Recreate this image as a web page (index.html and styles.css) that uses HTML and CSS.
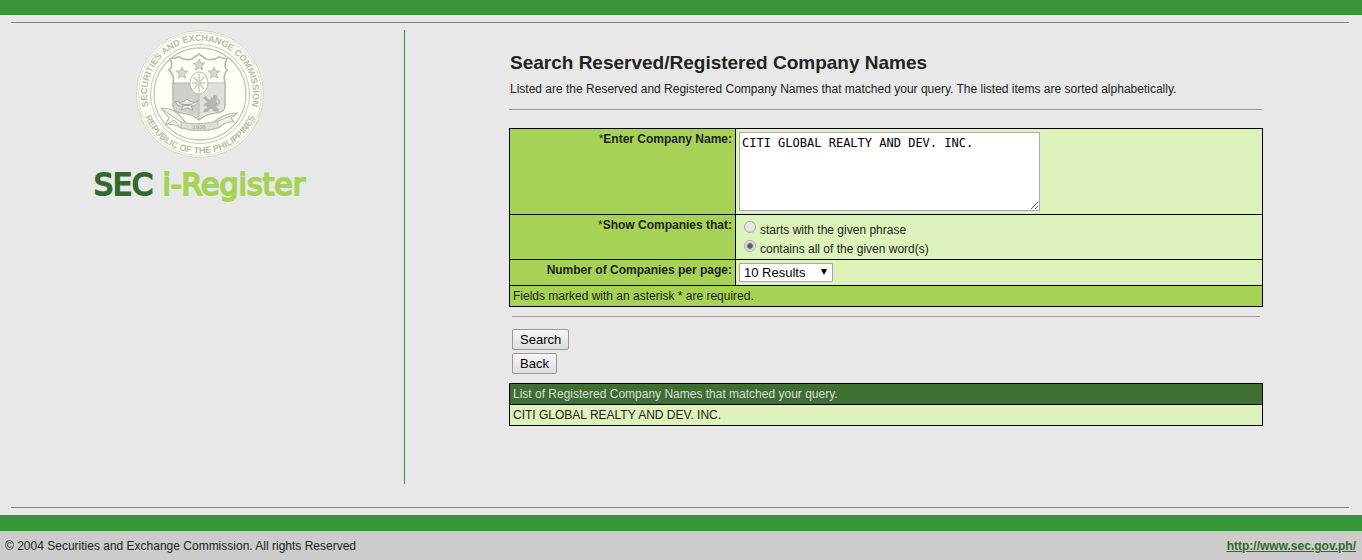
FILE: index.html
```html
<!DOCTYPE html>
<html lang="en">
<head>
  <meta charset="UTF-8">
  <meta name="viewport" content="width=device-width, initial-scale=1.0">
  <title>SEC i-Register</title>
  <link rel="stylesheet" href="styles.css">
</head>
<body>
  <div class="bar bar-top"></div>

  <div class="page">
    <div class="sidebar">
      <svg class="seal" viewBox="0 0 128 128" role="img" aria-label="SEC seal">
        <defs>
          <path id="arc-top" d="M14.2 82.1 A53 53 0 1 1 113.8 82.1"/>
          <path id="arc-bottom" d="M5.8 76.4 A59.5 59.5 0 0 0 122.2 76.4"/>
        </defs>
        <circle cx="64" cy="64" r="63.5" fill="#fffff6" stroke="#d5d5c4"/>
        <circle cx="64" cy="64" r="61.5" fill="none" stroke="#deded2"/>
        <circle cx="64" cy="64" r="49.5" fill="none" stroke="#c6c6be"/>
        <circle cx="64" cy="64" r="46" fill="none" stroke="#c6c6be" stroke-width="1.3"/>
        <text class="seal-text"><textPath href="#arc-top" startOffset="50%">SECURITIES AND EXCHANGE COMMISSION</textPath></text>
        <text class="seal-text"><textPath href="#arc-bottom" startOffset="50%">REPUBLIC OF THE PHILIPPINES</textPath></text>
        <!-- shield -->
        <path d="M63 24 L70 29 Q77 31 83 27 L91 29 Q87 36 91 40 Q87 45 89 53 V75 Q89 82 80 83 Q69 84 63 90 Q57 84 46 83 Q37 82 37 75 V53 Q39 45 33 40 Q38 36 34 29 L43 27 Q50 31 56 29 Z" fill="#fffff6" stroke="#b9b9b1" stroke-width="1.7"/>
        <path d="M38 53 H63 V88 Q57 83 47 82 Q38 81 38 74 Z" fill="#d0d0ca"/>
        <path d="M63 53 H88 V74 Q88 81 79 82 Q69 83 63 88 Z" fill="#e0e0db"/>
        <path d="M37 53 H89 M63 53 V89" stroke="#b9b9b1"/>
        <g fill="#d7d7d1" stroke="#babab1">
          <path id="star" d="M63 29 L64.600 32.800 L68.700 33.200 L65.600 35.900 L66.500 40 L63 37.800 L59.500 40 L60.400 35.900 L57.300 33.200 L61.400 32.800 Z"/>
          <use href="#star" x="-17" y="8"/>
          <use href="#star" x="15" y="8"/>
        </g>
        <ellipse cx="63" cy="53" rx="9" ry="11" fill="#fffff6" stroke="#bcbcb4"/>
        <path d="M63 44 V62 M56 53 H70 M58 47 L68 59 M68 47 L58 59" stroke="#ccccc4" stroke-width="1.5"/>
        <circle cx="63" cy="53" r="3" fill="#d3d3cb"/>
        <!-- eagle -->
        <path d="M39 71 Q45 74 49 71 L51 69 L54 71 Q58 74 62 71 Q60 77 55 76 L57 80 L51 78 L45 80 L47 76 Q41 77 39 71 Z" fill="#e9e9e2" stroke="#a9a9a3"/>
        <path d="M42 73 Q51 75 59 73 L53 76 H48 Z" fill="#a9a9a3"/>
        <!-- lion -->
        <path d="M67 68 L70 66 L72 69 L74 70 L75 67 L77 68 L77 65 L80 65 L82 68 L80 71 L82 74 L79 76 L83 79 L82 82 L77 81 L76 79 L74 79 L72 82 L67 82 L69 79 L71 78 L70 76 L67 76 L69 73 L71 72 Z" fill="#b6b6ae"/>
        <path d="M79 76 Q86 74 82 69" fill="none" stroke="#b6b6ae" stroke-width="1.5"/>
        <!-- ribbon -->
        <path d="M25 78 Q38 78 45 87 L50 93 Q63 96 78 92 Q88 83 101 83 L95 88 L98 92 Q89 91 83 98 Q64 103 45 98 Q38 93 29 95 L33 88 Z" fill="#f1f1ea" stroke="#bcbcb4" stroke-width="1.2"/>
        <path d="M45 92 Q64 96 82 91 V98 Q64 103 45 98 Z" fill="#dfdfd8" stroke="#bcbcb4"/>
        <path d="M26 79 L45 92 M30 95 L38 90 L45 98 M82 91 L100 84" fill="none" stroke="#bcbcb4"/>
        <text class="seal-year" x="63" y="99">1936</text>
      </svg>
      <div class="brand"><span class="brand-sec">SEC</span> i-Register</div>
    </div>

    <div class="main">
      <div class="content">
        <h1>Search Reserved/Registered Company Names</h1>
        <p class="intro">Listed are the Reserved and Registered Company Names that matched your query. The listed items are sorted alphabetically.</p>
        <hr>

        <form onsubmit="return false">
          <table class="form-table">
            <tr>
              <th scope="row">*<label for="company">Enter Company Name:</label></th>
              <td><textarea id="company" name="company" spellcheck="false">CITI GLOBAL REALTY AND DEV. INC.</textarea></td>
            </tr>
            <tr>
              <th scope="row">*<span id="match-label">Show Companies that:</span></th>
              <td>
                <div class="options" role="radiogroup" aria-labelledby="match-label">
                  <label><input type="radio" name="match" value="starts">starts with the given phrase</label>
                  <label><input type="radio" name="match" value="contains" checked>contains all of the given word(s)</label>
                </div>
              </td>
            </tr>
            <tr>
              <th scope="row"><label for="per-page">Number of Companies per page:</label></th>
              <td>
                <div class="select">
                  <select id="per-page" name="per-page">
                    <option>10 Results</option>
                    <option>20 Results</option>
                    <option>50 Results</option>
                  </select>
                </div>
              </td>
            </tr>
            <tr>
              <td class="note" colspan="2">Fields marked with an asterisk * are required.</td>
            </tr>
          </table>

          <div class="actions">
            <hr>
            <button type="submit">Search</button>
            <button type="button">Back</button>
          </div>
        </form>

        <table class="results">
          <tr><th>List of Registered Company Names that matched your query.</th></tr>
          <tr><td>CITI GLOBAL REALTY AND DEV. INC.</td></tr>
        </table>
      </div>
    </div>
  </div>

  <div class="bar"></div>
  <div class="footer">
    <span>&copy; 2004 Securities and Exchange Commission. All rights Reserved</span>
    <a href="http://www.sec.gov.ph/">http://www.sec.gov.ph/</a>
  </div>
</body>
</html>
```
FILE: styles.css
```css
* {
  box-sizing: border-box;
}
body {
  margin: 0;
  min-height: 100vh;
  display: flex;
  flex-direction: column;
  font-family: "Liberation Sans", Arial, sans-serif;
  font-size: 12px;
  line-height: 14px;
  color: #222;
  background-color: #e8e8e8;
}
.bar {
  height: 16px;
  background-color: #389638;
}
.bar-top {
  height: 15px;
}
.page {
  flex: 1;
  display: flex;
  margin: 7px 13px 7px 11px;
  padding: 7px 0 23px;
  border-top: 1px solid #808080;
  border-bottom: 1px solid #808080;
}
.sidebar {
  flex: 0 0 394px;
  display: flex;
  flex-direction: column;
  align-items: center;
  padding-right: 16px;
  border-right: 1px solid #389638;
}
.seal {
  width: 128px;
  height: 128px;
}
.seal-text {
  font-size: 9px;
  font-weight: bold;
  fill: #b9b9b1;
  text-anchor: middle;
}
.seal-year {
  font-size: 6px;
  font-weight: bold;
  fill: #b0b0a8;
  text-anchor: middle;
}
.brand {
  margin-top: 9px;
  font-family: "DejaVu Sans", sans-serif;
  font-size: 30px;
  line-height: 36px;
  color: #a6d355;
  -webkit-text-stroke: 2px currentColor;
}
.brand-sec {
  color: #33692f;
}
.main {
  flex: 1;
  padding: 21px 0 0 18px;
}
.content {
  width: 754px;
  max-width: 100%;
  margin: 0 auto;
}
h1 {
  margin: 0 1px;
  font-size: 19px;
  line-height: 24px;
}
.intro {
  margin: 7px 1px 13px;
}
hr {
  margin: 0 1px 0 0;
  border: 0;
  border-top: 1px solid #999;
}
table {
  width: 100%;
  border-collapse: collapse;
}
th, td {
  padding: 3px;
  border: 1px solid #000;
  text-align: left;
  vertical-align: top;
}
.form-table {
  margin-top: 18px;
}
.form-table th {
  width: 226px;
  text-align: right;
  font-weight: normal;
  background-color: #a6d355;
}
.form-table th label, .form-table th span {
  font-weight: bold;
}
.form-table td {
  background-color: #ddf3bb;
}
.form-table .note {
  background-color: #a6d355;
}
textarea {
  display: block;
  width: 301px;
  height: 79px;
  padding: 2px;
  border: 1px solid #a9a9a9;
  font-family: "DejaVu Sans Mono", monospace;
  font-size: 12px;
  line-height: 16px;
  color: #000;
  background-color: #fff;
}
.options label {
  display: flex;
  align-items: flex-end;
  height: 19px;
}
input[type="radio"] {
  appearance: none;
  width: 12px;
  height: 12px;
  margin: 0 4px 4px 5px;
  border: 1px solid #aaa;
  border-radius: 50%;
  background: linear-gradient(#eee, #ddd);
}
input[type="radio"]:checked {
  background: radial-gradient(circle, #606060 2px, #e6e6e6 4px);
}
.select {
  position: relative;
  width: 94px;
}
.select::after {
  content: "";
  position: absolute;
  top: 6px;
  right: 6px;
  border: 3px solid transparent;
  border-top: 6px solid #000;
  border-bottom: 0;
  pointer-events: none;
}
select {
  appearance: none;
  display: block;
  width: 100%;
  height: 19px;
  padding: 0 4px;
  border: 1px solid #a6a6a6;
  border-radius: 1px;
  font-family: inherit;
  font-size: 13px;
  color: #000;
  background-color: #fff;
}
.actions {
  display: flex;
  flex-direction: column;
  align-items: flex-start;
  gap: 3px;
  padding: 9px 3px;
}
.actions hr {
  width: 100%;
  margin-bottom: 9px;
}
button {
  height: 21px;
  padding: 0 7px;
  border: 1px solid #999;
  border-radius: 2px;
  font-family: inherit;
  font-size: 13px;
  color: #000;
  background: linear-gradient(#f6f6f6, #ddd);
}
.results th {
  font-weight: normal;
  color: #ddd;
  background-color: #3e6e32;
}
.results td {
  background-color: #ddf3bb;
}
.footer {
  display: flex;
  justify-content: space-between;
  padding: 8px 6px 7px 5px;
  background-color: #ccc;
}
.footer a {
  font-weight: bold;
  color: #33692f;
}
```
